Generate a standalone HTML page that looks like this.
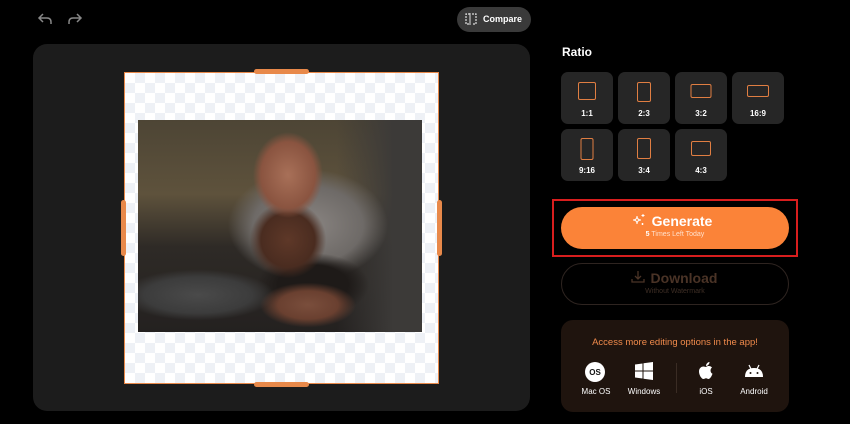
<!DOCTYPE html>
<html><head><meta charset="utf-8"><style>
*{margin:0;padding:0;box-sizing:border-box}
body{width:850px;height:424px;background:#000;font-family:"Liberation Sans",sans-serif;position:relative;overflow:hidden;color:#fff}
.abs{position:absolute}
.panel{left:33px;top:44px;width:497px;height:367px;background:#1c1c1c;border-radius:14px}
.canvas{left:124px;top:72px;width:315px;height:312px;background-color:#fff;
background-image:linear-gradient(45deg,#eef1f6 25%,transparent 25%,transparent 75%,#eef1f6 75%),linear-gradient(45deg,#eef1f6 25%,transparent 25%,transparent 75%,#eef1f6 75%);
background-size:20px 20px;background-position:0 0,10px 10px;border:1px solid #e8894a}
.photo{left:138px;top:120px;width:284px;height:212px;overflow:hidden;
background:
radial-gradient(ellipse 60px 28px at 170px 185px,#7a4e3c 0%,#6a4030 50%,transparent 80%),
radial-gradient(ellipse 90px 30px at 60px 175px,#4a4a4a 0%,#3c3c3c 60%,transparent 85%),
radial-gradient(ellipse 45px 55px at 150px 55px,#a87058 0%,#8a5440 60%,transparent 78%),
radial-gradient(ellipse 45px 45px at 150px 120px,#5e3828 0%,#4a2c20 60%,transparent 85%),
radial-gradient(ellipse 70px 40px at 175px 165px,#1e1a18 0%,#1e1a18 50%,transparent 80%),
radial-gradient(ellipse 100px 70px at 170px 105px,#8a8582 0%,#6e6a67 55%,transparent 80%),
linear-gradient(90deg,transparent 70%,#3c3a38 90%),
linear-gradient(180deg,#4d4535 0%,#5e523c 35%,#2e2a26 60%,#242120 100%)}
.handle{background:#e8894a;border-radius:3px}
.ratio .b{position:absolute;width:52px;height:52px;background:#262626;border-radius:7px}
.ratio .b i{position:absolute;border:1.5px solid #e07e42;border-radius:2px;left:50%;transform:translateX(-50%)}
.ratio .b span{position:absolute;bottom:6px;width:100%;text-align:center;font-size:8px;font-weight:bold}
</style></head><body>
<svg class="abs" style="left:37px;top:12px" width="16" height="14" viewBox="0 0 16 14"><path d="M6 2 L2 6 L6 10 M2 6 H10 Q14 6 14 10 V12" fill="none" stroke="#888" stroke-width="1.5"/></svg>
<svg class="abs" style="left:67px;top:12px" width="16" height="14" viewBox="0 0 16 14"><path d="M10 2 L14 6 L10 10 M14 6 H6 Q2 6 2 10 V12" fill="none" stroke="#888" stroke-width="1.5"/></svg>
<div class="abs" style="left:457px;top:7px;width:74px;height:25px;background:#3a3a3a;border-radius:13px;font-size:9px;font-weight:bold;line-height:25px;padding-left:26px">Compare</div>
<svg class="abs" style="left:465px;top:13px" width="12" height="12" viewBox="0 0 12 12"><path d="M5 1H1V11H5M7 1H11V11H7" fill="none" stroke="#ddd" stroke-width="1.2" stroke-dasharray="2 1"/><path d="M5 0V12" stroke="#ddd"/></svg>

<div class="abs panel"></div>
<div class="abs canvas"></div>
<div class="abs photo"></div>
<div class="abs handle" style="left:254px;top:69px;width:55px;height:5px"></div>
<div class="abs handle" style="left:254px;top:382px;width:55px;height:5px"></div>
<div class="abs handle" style="left:121px;top:200px;width:5px;height:56px"></div>
<div class="abs handle" style="left:437px;top:200px;width:5px;height:56px"></div>

<div class="abs" style="left:562px;top:45px;font-size:12px;font-weight:bold">Ratio</div>
<div class="ratio">
<div class="b" style="left:561px;top:72px"><i style="top:10px;width:18px;height:18px"></i><span>1:1</span></div>
<div class="b" style="left:618px;top:72px"><i style="top:10px;width:14px;height:20px"></i><span>2:3</span></div>
<div class="b" style="left:675px;top:72px"><i style="top:12px;width:21px;height:14px"></i><span>3:2</span></div>
<div class="b" style="left:732px;top:72px"><i style="top:13px;width:22px;height:12px"></i><span>16:9</span></div>
<div class="b" style="left:561px;top:129px"><i style="top:9px;width:13px;height:22px"></i><span>9:16</span></div>
<div class="b" style="left:618px;top:129px"><i style="top:9px;width:14px;height:21px"></i><span>3:4</span></div>
<div class="b" style="left:675px;top:129px"><i style="top:12px;width:20px;height:15px"></i><span>4:3</span></div>
</div>

<div class="abs" style="left:552px;top:199px;width:246px;height:58px;border:2px solid #d81e1e"></div>
<div class="abs" style="left:561px;top:207px;width:228px;height:42px;background:#fb8338;border-radius:21px;text-align:center">
<div style="font-size:14px;font-weight:bold;margin-top:6px;padding-left:14px">Generate</div>
<div style="font-size:7px;color:#ffe0cc;margin-top:2px"><b style="color:#fff">5</b> Times Left Today</div></div>
<svg class="abs" style="left:632px;top:213px" width="14" height="14" viewBox="0 0 14 14" fill="none" stroke="#fff" stroke-width="1"><path d="M5 3 Q5 7 1 7 Q5 7 5 11 Q5 7 9 7 Q5 7 5 3Z"/><path d="M11 1V4M9.5 2.5H12.5M10.5 10V12M9.5 11H11.5"/></svg>

<div class="abs" style="left:561px;top:263px;width:228px;height:42px;border:1px solid #2e2420;border-radius:21px;text-align:center">
<div style="font-size:14px;font-weight:bold;margin-top:6px;padding-left:18px;color:#4a3326">Download</div>
<div style="font-size:7px;color:#3e2e25;margin-top:2px">Without Watermark</div></div>
<svg class="abs" style="left:631px;top:270px" width="14" height="14" viewBox="0 0 14 14" fill="none" stroke="#4a3326" stroke-width="1.3"><path d="M7 1V9M4 6L7 9L10 6M1 9V12H13V9"/></svg>

<div class="abs" style="left:561px;top:320px;width:228px;height:92px;background:#1f140e;border-radius:12px">
<div style="text-align:center;font-size:9.5px;color:#f08a4b;margin-top:17px">Access more editing options in the app!</div>
</div>
<div class="abs" style="left:676px;top:363px;width:1px;height:30px;background:#3a2c24"></div>
<div class="abs" style="left:585px;top:362px;width:20px;height:20px;border-radius:50%;background:#fff;color:#111;font-size:8px;text-align:center;line-height:22px;font-weight:bold">OS</div>
<svg class="abs" style="left:635px;top:362px" width="18" height="18" viewBox="0 0 18 18" fill="#fff"><path d="M0 2.5L7.5 1.5V8.5H0ZM8.5 1.3L18 0V8.5H8.5ZM0 9.5H7.5V16.5L0 15.5ZM8.5 9.5H18V18L8.5 16.7Z"/></svg>
<svg class="abs" style="left:697px;top:361px" width="18" height="20" viewBox="0 0 18 20" fill="#fff"><path d="M9 6C11 4.5 13.5 4.8 15 6.5C13 8 13 11.5 15.5 12.8C14.5 15.5 13 18 11.5 18C10.5 18 10 17.3 9 17.3C8 17.3 7.5 18 6.5 18C4.5 18 2 14 2 10.5C2 7 4.5 5.5 6.5 5.5C7.5 5.5 8.3 6 9 6Z"/><path d="M9 5C9 3 10.5 1.2 12.5 1C12.5 3 11 4.8 9 5Z"/></svg>
<svg class="abs" style="left:744px;top:364px" width="20" height="14" viewBox="0 0 20 14" fill="#fff"><path d="M1 13Q1 4 10 4Q19 4 19 13Z"/><path d="M5 1L7 5M15 1L13 5" stroke="#fff" stroke-width="1.2"/><circle cx="6.5" cy="9" r="1" fill="#1f140e"/><circle cx="13.5" cy="9" r="1" fill="#1f140e"/></svg>
<div class="abs" style="left:574px;top:387px;width:44px;text-align:center;font-size:8px">Mac OS</div>
<div class="abs" style="left:622px;top:387px;width:44px;text-align:center;font-size:8px">Windows</div>
<div class="abs" style="left:684px;top:387px;width:44px;text-align:center;font-size:8px">iOS</div>
<div class="abs" style="left:732px;top:387px;width:44px;text-align:center;font-size:8px">Android</div>
</body></html>
